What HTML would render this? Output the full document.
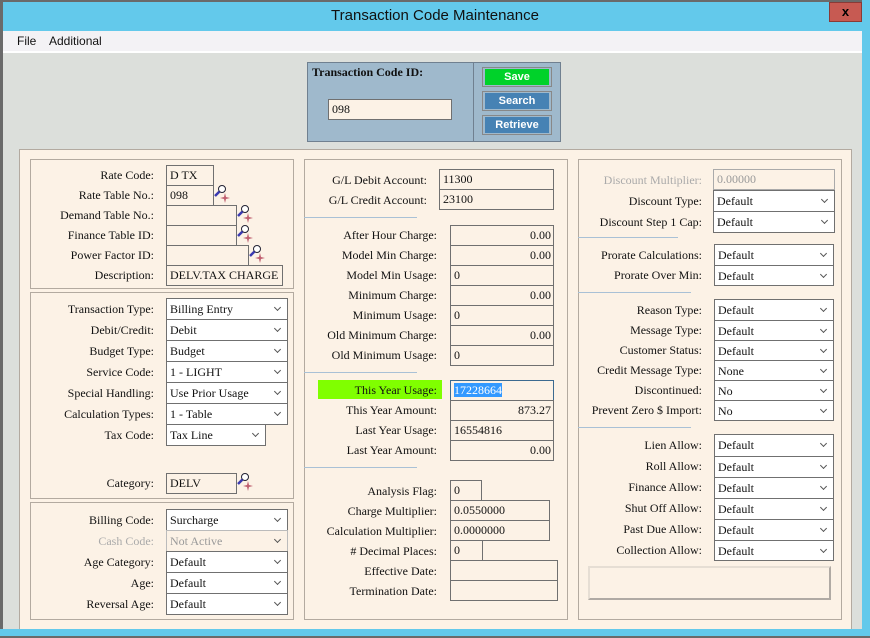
<!DOCTYPE html>
<html><head><meta charset="utf-8"><style>
*{box-sizing:border-box;margin:0;padding:0}
body{width:870px;height:638px;overflow:hidden;background:#6a6a6a;font-family:"Liberation Serif",serif;font-size:12px;color:#111;position:relative}
div{position:absolute}
.l{text-align:right;white-space:nowrap;line-height:20px;height:20px}
.i{border:1px solid #707070;background:#fcf2e6;line-height:19px;padding-left:3px;white-space:nowrap;overflow:hidden}
.r{text-align:right;padding-right:2px}
.s{border:1px solid #707070;background:#fff;line-height:21px;padding-left:3px;white-space:nowrap}
.s:after{content:"";position:absolute;right:7px;top:6px;width:4px;height:4px;border-right:1.5px solid #555;border-bottom:1.5px solid #555;transform:rotate(45deg)}
.box{border:1px solid #b3aaa0}
.sep{height:1px;background:#a9c1d6}
.btn{left:482px;width:70px;height:20px;border:1px solid #888;font:bold 11px "Liberation Sans",sans-serif;color:#fff;text-align:center;line-height:16px}
.btn span{position:absolute;left:2px;top:1px;right:2px;bottom:1px;background:#4682b4}
</style></head><body>
<div style="left:0;top:0;width:870px;height:31px;background:#63c9eb"></div>
<div style="left:0;top:0;width:870px;height:2px;background:#6a6a6a"></div>
<div style="left:0;top:0;width:3px;height:638px;background:#6a6a6a"></div>
<div style="left:862px;top:0;width:8px;height:638px;background:#63c9eb"></div>
<div style="left:0;top:629px;width:870px;height:7px;background:#63c9eb"></div>
<div style="left:0;top:636px;width:870px;height:2px;background:#6a6a6a"></div>
<div style="left:0;top:7px;width:870px;text-align:center;font:15px 'Liberation Sans',sans-serif;color:#111">Transaction Code Maintenance</div>
<div style="left:829px;top:2px;width:33px;height:20px;background:#c75a52;border:1px solid #8a3a36;color:#000;font:bold 13px 'Liberation Sans',sans-serif;text-align:center;line-height:17px">x</div>
<div style="left:3px;top:31px;width:859px;height:22px;background:#f3f2f5;font:12px 'Liberation Sans',sans-serif;line-height:20px"><span style="position:absolute;left:14px">File</span><span style="position:absolute;left:46px">Additional</span></div>
<div style="left:3px;top:51px;width:859px;height:2px;background:#fff"></div>
<div style="left:3px;top:53px;width:859px;height:576px;background:#dcdfdb"></div>
<!-- header -->
<div style="left:307px;top:62px;width:167px;height:80px;background:#9fb9cc;border:1px solid #708090"></div>
<div style="left:473px;top:62px;width:88px;height:80px;background:#9fb9cc;border:1px solid #708090"></div>
<div style="left:312px;top:65px;font-weight:bold;font-size:12px">Transaction Code ID:</div>
<div class="i" style="left:328px;top:99px;width:124px;height:21px;line-height:19px">098</div>
<div class="btn" style="top:67px"><span style="background:#00d22a">Save</span></div>
<div class="btn" style="top:91px"><span>Search</span></div>
<div class="btn" style="top:115px"><span>Retrieve</span></div>
<!-- main panel -->
<div style="left:19px;top:149px;width:833px;height:480px;background:#fcf2e6;border:1px solid #b3aaa0;border-bottom:none"></div>
<div class="box" style="left:30px;top:159px;width:264px;height:130px"></div>
<div class="box" style="left:30px;top:292px;width:264px;height:207px"></div>
<div class="box" style="left:30px;top:502px;width:264px;height:118px"></div>
<div class="box" style="left:304px;top:159px;width:264px;height:461px"></div>
<div class="box" style="left:578px;top:159px;width:264px;height:461px"></div>

<div class="l" style="left:30px;width:124px;top:165px">Rate Code:</div><div class="i" style="left:166px;top:165px;width:48px;height:21px">D TX</div>
<div class="l" style="left:30px;width:124px;top:185px">Rate Table No.:</div><div class="i" style="left:166px;top:185px;width:48px;height:21px">098</div>
<div class="l" style="left:30px;width:124px;top:205px">Demand Table No.:</div><div class="i" style="left:166px;top:205px;width:71px;height:21px"></div>
<div class="l" style="left:30px;width:124px;top:225px">Finance Table ID:</div><div class="i" style="left:166px;top:225px;width:71px;height:21px"></div>
<div class="l" style="left:30px;width:124px;top:245px">Power Factor ID:</div><div class="i" style="left:166px;top:245px;width:83px;height:21px"></div>
<div class="l" style="left:30px;width:124px;top:265px">Description:</div><div class="i" style="left:166px;top:265px;width:117px;height:21px">DELV.TAX CHARGE</div>

<div class="l" style="left:30px;width:124px;top:299px">Transaction Type:</div><div class="s" style="left:166px;top:298px;width:122px;height:22px">Billing Entry</div>
<div class="l" style="left:30px;width:124px;top:320px">Debit/Credit:</div><div class="s" style="left:166px;top:319px;width:122px;height:22px">Debit</div>
<div class="l" style="left:30px;width:124px;top:341px">Budget Type:</div><div class="s" style="left:166px;top:340px;width:122px;height:22px">Budget</div>
<div class="l" style="left:30px;width:124px;top:362px">Service Code:</div><div class="s" style="left:166px;top:361px;width:122px;height:22px">1 - LIGHT</div>
<div class="l" style="left:30px;width:124px;top:383px">Special Handling:</div><div class="s" style="left:166px;top:382px;width:122px;height:22px">Use Prior Usage</div>
<div class="l" style="left:30px;width:124px;top:404px">Calculation Types:</div><div class="s" style="left:166px;top:403px;width:122px;height:22px">1 - Table</div>
<div class="l" style="left:30px;width:124px;top:425px">Tax Code:</div><div class="s" style="left:166px;top:424px;width:100px;height:22px">Tax Line</div>
<div class="l" style="left:30px;width:124px;top:473px">Category:</div><div class="i" style="left:166px;top:473px;width:71px;height:21px">DELV</div>

<div class="l" style="left:30px;width:124px;top:510px">Billing Code:</div><div class="s" style="left:166px;top:509px;width:122px;height:22px">Surcharge</div>
<div class="l" style="left:30px;width:124px;top:531px;color:#aaa">Cash Code:</div><div class="s" style="left:166px;top:530px;width:122px;height:22px;color:#999;background:#fcf2e6;border-color:#bbb">Not Active</div>
<div class="l" style="left:30px;width:124px;top:552px">Age Category:</div><div class="s" style="left:166px;top:551px;width:122px;height:22px">Default</div>
<div class="l" style="left:30px;width:124px;top:573px">Age:</div><div class="s" style="left:166px;top:572px;width:122px;height:22px">Default</div>
<div class="l" style="left:30px;width:124px;top:594px">Reversal Age:</div><div class="s" style="left:166px;top:593px;width:122px;height:22px">Default</div>

<svg style="position:absolute;left:212px;top:184px" width="20" height="20"><circle cx="10" cy="5" r="3.5" fill="#fff" stroke="#223" stroke-width="1"/><line x1="7.5" y1="7.5" x2="3" y2="12" stroke="#3b3bb0" stroke-width="2.5"/><path d="M13 9 L14 13 L18 14 L14 15 L13 19 L12 15 L8 14 L12 13Z" fill="#c06070"/></svg>
<svg style="position:absolute;left:235px;top:204px" width="20" height="20"><circle cx="10" cy="5" r="3.5" fill="#fff" stroke="#223" stroke-width="1"/><line x1="7.5" y1="7.5" x2="3" y2="12" stroke="#3b3bb0" stroke-width="2.5"/><path d="M13 9 L14 13 L18 14 L14 15 L13 19 L12 15 L8 14 L12 13Z" fill="#c06070"/></svg>
<svg style="position:absolute;left:235px;top:224px" width="20" height="20"><circle cx="10" cy="5" r="3.5" fill="#fff" stroke="#223" stroke-width="1"/><line x1="7.5" y1="7.5" x2="3" y2="12" stroke="#3b3bb0" stroke-width="2.5"/><path d="M13 9 L14 13 L18 14 L14 15 L13 19 L12 15 L8 14 L12 13Z" fill="#c06070"/></svg>
<svg style="position:absolute;left:247px;top:244px" width="20" height="20"><circle cx="10" cy="5" r="3.5" fill="#fff" stroke="#223" stroke-width="1"/><line x1="7.5" y1="7.5" x2="3" y2="12" stroke="#3b3bb0" stroke-width="2.5"/><path d="M13 9 L14 13 L18 14 L14 15 L13 19 L12 15 L8 14 L12 13Z" fill="#c06070"/></svg>
<svg style="position:absolute;left:235px;top:472px" width="20" height="20"><circle cx="10" cy="5" r="3.5" fill="#fff" stroke="#223" stroke-width="1"/><line x1="7.5" y1="7.5" x2="3" y2="12" stroke="#3b3bb0" stroke-width="2.5"/><path d="M13 9 L14 13 L18 14 L14 15 L13 19 L12 15 L8 14 L12 13Z" fill="#c06070"/></svg>

<!-- middle -->
<div class="l" style="left:304px;width:123px;top:170px">G/L Debit Account:</div><div class="i" style="left:439px;top:169px;width:115px;height:21px">11300</div>
<div class="l" style="left:304px;width:123px;top:190px">G/L Credit Account:</div><div class="i" style="left:439px;top:189px;width:115px;height:21px">23100</div>
<div class="sep" style="left:304px;top:217px;width:113px"></div>
<div class="l" style="left:304px;width:133px;top:225px">After Hour Charge:</div><div class="i r" style="left:450px;top:225px;width:104px;height:21px">0.00</div>
<div class="l" style="left:304px;width:133px;top:245px">Model Min Charge:</div><div class="i r" style="left:450px;top:245px;width:104px;height:21px">0.00</div>
<div class="l" style="left:304px;width:133px;top:265px">Model Min Usage:</div><div class="i" style="left:450px;top:265px;width:104px;height:21px">0</div>
<div class="l" style="left:304px;width:133px;top:285px">Minimum Charge:</div><div class="i r" style="left:450px;top:285px;width:104px;height:21px">0.00</div>
<div class="l" style="left:304px;width:133px;top:305px">Minimum Usage:</div><div class="i" style="left:450px;top:305px;width:104px;height:21px">0</div>
<div class="l" style="left:304px;width:133px;top:325px">Old Minimum Charge:</div><div class="i r" style="left:450px;top:325px;width:104px;height:21px">0.00</div>
<div class="l" style="left:304px;width:133px;top:345px">Old Minimum Usage:</div><div class="i" style="left:450px;top:345px;width:104px;height:21px">0</div>
<div class="sep" style="left:304px;top:372px;width:113px"></div>
<div style="left:318px;top:380px;width:124px;height:19px;background:#80ff00"></div>
<div class="l" style="left:304px;width:133px;top:380px">This Year Usage:</div><div class="i" style="left:450px;top:380px;width:104px;height:21px;border-color:#3c6a90"><span style="background:#3399ff;color:#fff">17228664</span></div>
<div class="l" style="left:304px;width:133px;top:400px">This Year Amount:</div><div class="i r" style="left:450px;top:400px;width:104px;height:21px">873.27</div>
<div class="l" style="left:304px;width:133px;top:420px">Last Year Usage:</div><div class="i" style="left:450px;top:420px;width:104px;height:21px">16554816</div>
<div class="l" style="left:304px;width:133px;top:440px">Last Year Amount:</div><div class="i r" style="left:450px;top:440px;width:104px;height:21px">0.00</div>
<div class="sep" style="left:304px;top:467px;width:113px"></div>
<div class="l" style="left:304px;width:133px;top:481px">Analysis Flag:</div><div class="i" style="left:450px;top:480px;width:32px;height:21px">0</div>
<div class="l" style="left:304px;width:133px;top:501px">Charge Multiplier:</div><div class="i" style="left:450px;top:500px;width:100px;height:21px">0.0550000</div>
<div class="l" style="left:304px;width:133px;top:521px">Calculation Multiplier:</div><div class="i" style="left:450px;top:520px;width:100px;height:21px">0.0000000</div>
<div class="l" style="left:304px;width:133px;top:541px"># Decimal Places:</div><div class="i" style="left:450px;top:540px;width:33px;height:21px">0</div>
<div class="l" style="left:304px;width:133px;top:561px">Effective Date:</div><div class="i" style="left:450px;top:560px;width:108px;height:21px"></div>
<div class="l" style="left:304px;width:133px;top:581px">Termination Date:</div><div class="i" style="left:450px;top:580px;width:108px;height:21px"></div>

<!-- right -->
<div class="l" style="left:578px;width:124px;top:170px;color:#aaa">Discount Multiplier:</div><div class="i" style="left:713px;top:169px;width:122px;height:21px;color:#999;border-color:#aaa">0.00000</div>
<div class="l" style="left:578px;width:124px;top:191px">Discount Type:</div><div class="s" style="left:713px;top:190px;width:122px;height:22px">Default</div>
<div class="l" style="left:578px;width:124px;top:212px">Discount Step 1 Cap:</div><div class="s" style="left:713px;top:211px;width:122px;height:22px">Default</div>
<div class="sep" style="left:578px;top:237px;width:100px"></div>
<div class="l" style="left:578px;width:124px;top:245px">Prorate Calculations:</div><div class="s" style="left:714px;top:244px;width:120px;height:22px">Default</div>
<div class="l" style="left:578px;width:124px;top:265px">Prorate Over Min:</div><div class="s" style="left:714px;top:265px;width:120px;height:21px">Default</div>
<div class="sep" style="left:578px;top:292px;width:113px"></div>
<div class="l" style="left:578px;width:124px;top:300px">Reason Type:</div><div class="s" style="left:714px;top:299px;width:120px;height:22px">Default</div>
<div class="l" style="left:578px;width:124px;top:320px">Message Type:</div><div class="s" style="left:714px;top:320px;width:120px;height:21px">Default</div>
<div class="l" style="left:578px;width:124px;top:340px">Customer Status:</div><div class="s" style="left:714px;top:340px;width:120px;height:21px">Default</div>
<div class="l" style="left:578px;width:124px;top:360px">Credit Message Type:</div><div class="s" style="left:714px;top:360px;width:120px;height:21px">None</div>
<div class="l" style="left:578px;width:124px;top:380px">Discontinued:</div><div class="s" style="left:714px;top:380px;width:120px;height:21px">No</div>
<div class="l" style="left:578px;width:124px;top:400px">Prevent Zero $ Import:</div><div class="s" style="left:714px;top:400px;width:120px;height:21px">No</div>
<div class="sep" style="left:578px;top:427px;width:113px"></div>
<div class="l" style="left:578px;width:124px;top:435px">Lien Allow:</div><div class="s" style="left:714px;top:434px;width:120px;height:23px">Default</div>
<div class="l" style="left:578px;width:124px;top:456px">Roll Allow:</div><div class="s" style="left:714px;top:456px;width:120px;height:22px">Default</div>
<div class="l" style="left:578px;width:124px;top:477px">Finance Allow:</div><div class="s" style="left:714px;top:477px;width:120px;height:22px">Default</div>
<div class="l" style="left:578px;width:124px;top:498px">Shut Off Allow:</div><div class="s" style="left:714px;top:498px;width:120px;height:22px">Default</div>
<div class="l" style="left:578px;width:124px;top:519px">Past Due Allow:</div><div class="s" style="left:714px;top:519px;width:120px;height:22px">Default</div>
<div class="l" style="left:578px;width:124px;top:540px">Collection Allow:</div><div class="s" style="left:714px;top:540px;width:120px;height:21px">Default</div>
<div style="left:588px;top:566px;width:243px;height:34px;border:2px solid #b0aaa4;border-top-color:#e6ded4;border-left-color:#e6ded4"></div>
</body></html>
